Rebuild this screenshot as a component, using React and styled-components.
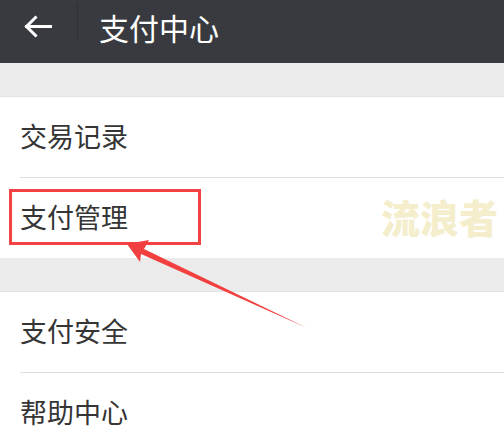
import React from "react";
import styled, { createGlobalStyle } from "styled-components";

const Global = createGlobalStyle`
  html, body { margin: 0; padding: 0; background: #ebebeb; }
  body { font-family: "Noto Sans CJK SC", "Noto Sans", sans-serif; }
`;

const Page = styled.div`
  position: relative;
  width: 504px;
  height: 440px;
  overflow: hidden;
  background: #ebebeb;
`;

const TopBar = styled.header`
  height: 63px;
  background: #393a3f;
  display: flex;
  align-items: center;
`;

const BackButton = styled.div`
  width: 77px;
  height: 63px;
  display: flex;
  align-items: center;
  justify-content: center;
  box-sizing: border-box;
  padding: 0 3px 11px 0;
`;

const Separator = styled.div`
  width: 1px;
  height: 39px;
  align-self: flex-start;
  margin-top: 3px;
  background: #2f3034;
`;

const Title = styled.h1`
  margin: 0 0 0 21px;
  padding-bottom: 10px;
  font-size: 30px;
  font-weight: 400;
  color: #ffffff;
  line-height: 1;
`;

const Group = styled.section`
  margin-top: ${(p) => p.$gap}px;
  background: #ffffff;
  border-top: 1px solid #e3e3e3;
`;

const Row = styled.div`
  height: 80px;
  box-sizing: border-box;
  display: flex;
  align-items: center;
  padding: 0 0 3px 20px;
  font-size: 27px;
  color: #353535;
  position: relative;
  & + & {
    height: 81px;
    padding-top: 1px;
  }
  & + &::before {
    content: "";
    position: absolute;
    left: 20px;
    right: 0;
    top: 0;
    height: 1px;
    background: #dedede;
  }
`;

const Watermark = styled.div`
  position: absolute;
  right: 6px;
  top: 188px;
  font-size: 39px;
  font-weight: 900;
  color: #f4eecd;
`;

const Highlight = styled.div`
  position: absolute;
  left: 9px;
  top: 189px;
  width: 192px;
  height: 56px;
  box-sizing: border-box;
  border: 3px solid #f44242;
`;

const Overlay = styled.svg`
  position: absolute;
  left: 0;
  top: 0;
  pointer-events: none;
`;

export default function App() {
  return (
    <>
      <Global />
      <Page>
        <TopBar>
          <BackButton>
            <svg width="29" height="23" viewBox="0 0 29 23">
              <path
                d="M27.5 11.5 H3.5 M12.5 2.5 L3.5 11.5 L12.5 20.5"
                stroke="#fff"
                strokeWidth="3"
                fill="none"
                strokeLinecap="square"
                strokeLinejoin="miter"
              />
            </svg>
          </BackButton>
          <Separator />
          <Title>支付中心</Title>
        </TopBar>
        <Group $gap={33}>
          <Row>交易记录</Row>
          <Row>支付管理</Row>
        </Group>
        <Group $gap={33}>
          <Row>支付安全</Row>
          <Row>帮助中心</Row>
        </Group>
        <Watermark>流浪者</Watermark>
        <Highlight />
        <Overlay width="504" height="440" viewBox="0 0 504 440">
          <polygon points="127,244 149,240 144,249 307,328 141,254 140,262" fill="#f24040" />
        </Overlay>
      </Page>
    </>
  );
}
